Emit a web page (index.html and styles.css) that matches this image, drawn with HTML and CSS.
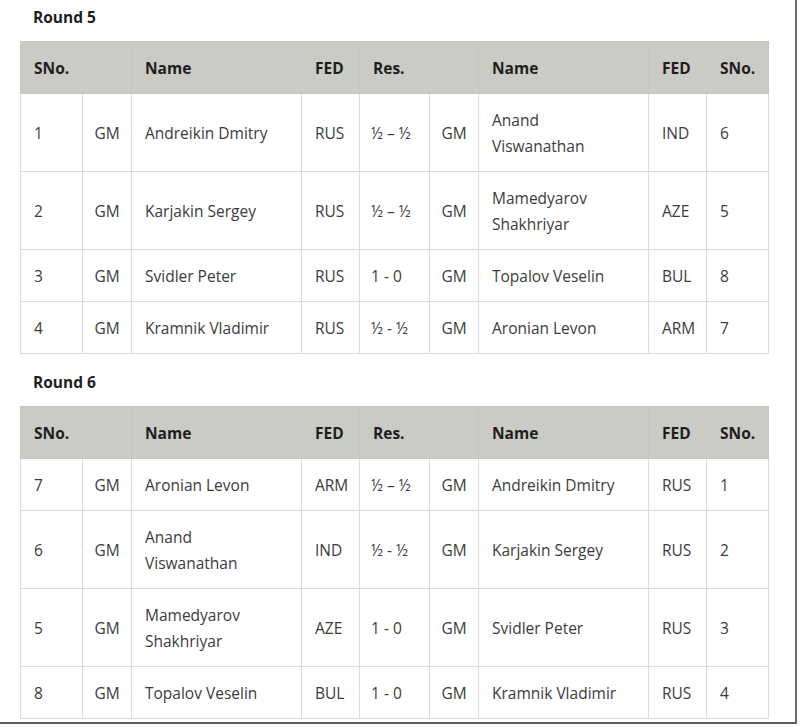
FILE: index.html
```html
<!DOCTYPE html>
<html>
<head>
<meta charset="utf-8">
<link rel="stylesheet" href="styles.css">
</head>
<body>
<div class="frame">
  <h3 class="round first">Round 5</h3>
  <table class="pairings">
    <colgroup>
      <col class="c-sno"><col class="c-gm"><col class="c-name"><col class="c-fed"><col class="c-res"><col class="c-gm"><col class="c-name"><col class="c-fed"><col class="c-sno">
    </colgroup>
    <thead>
      <tr><th>SNo.</th><th></th><th>Name</th><th>FED</th><th>Res.</th><th></th><th>Name</th><th>FED</th><th>SNo.</th></tr>
    </thead>
    <tbody>
      <tr><td>1</td><td>GM</td><td>Andreikin Dmitry</td><td>RUS</td><td>½ – ½</td><td>GM</td><td>Anand Viswanathan</td><td>IND</td><td>6</td></tr>
      <tr><td>2</td><td>GM</td><td>Karjakin Sergey</td><td>RUS</td><td>½ – ½</td><td>GM</td><td>Mamedyarov Shakhriyar</td><td>AZE</td><td>5</td></tr>
      <tr><td>3</td><td>GM</td><td>Svidler Peter</td><td>RUS</td><td>1 - 0</td><td>GM</td><td>Topalov Veselin</td><td>BUL</td><td>8</td></tr>
      <tr><td>4</td><td>GM</td><td>Kramnik Vladimir</td><td>RUS</td><td>½ - ½</td><td>GM</td><td>Aronian Levon</td><td>ARM</td><td>7</td></tr>
    </tbody>
  </table>
  <h3 class="round">Round 6</h3>
  <table class="pairings">
    <colgroup>
      <col class="c-sno"><col class="c-gm"><col class="c-name"><col class="c-fed"><col class="c-res"><col class="c-gm"><col class="c-name"><col class="c-fed"><col class="c-sno">
    </colgroup>
    <thead>
      <tr><th>SNo.</th><th></th><th>Name</th><th>FED</th><th>Res.</th><th></th><th>Name</th><th>FED</th><th>SNo.</th></tr>
    </thead>
    <tbody>
      <tr><td>7</td><td>GM</td><td>Aronian Levon</td><td>ARM</td><td>½ – ½</td><td>GM</td><td>Andreikin Dmitry</td><td>RUS</td><td>1</td></tr>
      <tr><td>6</td><td>GM</td><td>Anand Viswanathan</td><td>IND</td><td>½ - ½</td><td>GM</td><td>Karjakin Sergey</td><td>RUS</td><td>2</td></tr>
      <tr><td>5</td><td>GM</td><td>Mamedyarov Shakhriyar</td><td>AZE</td><td>1 - 0</td><td>GM</td><td>Svidler Peter</td><td>RUS</td><td>3</td></tr>
      <tr><td>8</td><td>GM</td><td>Topalov Veselin</td><td>BUL</td><td>1 - 0</td><td>GM</td><td>Kramnik Vladimir</td><td>RUS</td><td>4</td></tr>
    </tbody>
  </table>
</div>
</body>
</html>
```
FILE: styles.css
```css
html, body {
  margin: 0;
  padding: 0;
  background: #ffffff;
}
body {
  font-family: "Open Sans", "Liberation Sans", sans-serif;
  font-size: 15.5px;
  color: #3c3c3c;
}
.frame {
  width: 797px;
  height: 724px;
  box-sizing: border-box;
  padding-left: 20px;
  border-right: 2px solid #6b6b6b;
  border-bottom: 2px solid #5e5e5e;
  overflow: hidden;
}
.round {
  margin: 18px 0 14px;
  padding-left: 13px;
  font-size: 15.5px;
  line-height: 20px;
  font-weight: 700;
  color: #1e1e1e;
}
.round.first {
  margin-top: 7px;
}
.pairings {
  border-collapse: collapse;
  table-layout: fixed;
  width: 749px;
}
.c-sno { width: 62px; }
.c-gm { width: 49px; }
.c-name { width: 170px; }
.c-fed { width: 58px; }
.c-res { width: 70px; }
.pairings th,
.pairings td {
  border: 1px solid #dcdcdc;
  padding: 13px 18px 12px 13px;
  line-height: 26px;
  text-align: left;
  vertical-align: middle;
}
.pairings th {
  background: #cbcbc5;
  border-color: #c6c6c0;
  font-weight: 700;
  color: #1e1e1e;
}
.pairings td:nth-child(2),
.pairings td:nth-child(6) {
  padding-left: 6px;
  padding-right: 6px;
  text-align: center;
}
.pairings td:nth-child(5) {
  padding-left: 11px;
  padding-right: 4px;
  white-space: nowrap;
}
```
